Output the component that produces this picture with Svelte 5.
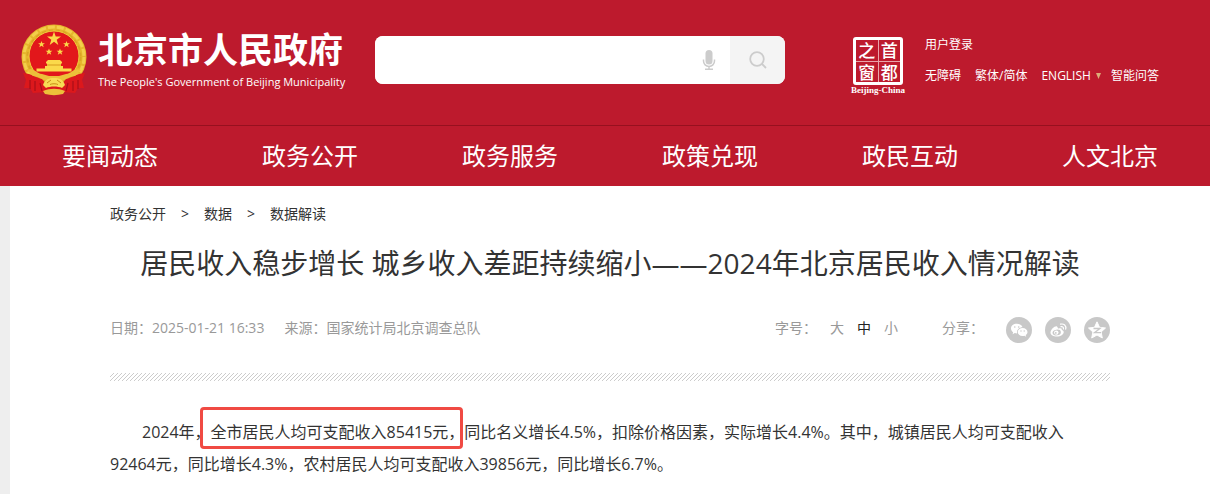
<script>
  const nav = ['要闻动态', '政务公开', '政务服务', '政策兑现', '政民互动', '人文北京'];
  const sizes = ['大', '中', '小'];
  let size = $state('中');
  let query = $state('');
</script>

<header>
  <div class="top">
    <a class="brand" href="#home">
      <svg class="emblem" viewBox="0 0 68 74" aria-hidden="true">
        <circle cx="34" cy="34" r="32.5" fill="#e6b62c" />
        <circle cx="34" cy="34" r="30" fill="none" stroke="#f3cf4b" stroke-width="3" stroke-dasharray="7 2" />
        <circle cx="34" cy="34" r="26.500" fill="none" stroke="#d9a524" stroke-width="2" stroke-dasharray="4 3" />
        <circle cx="34" cy="33" r="25" fill="#e2171b" stroke="#f0c83c" stroke-width="1" />
        <g fill="#fbd94a">
          <path d="M34 8.500l1.700 5.100h5.300l-4.300 3.200 1.600 5.200-4.300-3.200-4.300 3.200 1.600-5.200-4.300-3.200h5.300z" />
          <path d="M21.500 18l.9 2.300h2.500l-2 1.500.8 2.500-2.200-1.500-2.200 1.500.8-2.500-2-1.500h2.500zM46.500 18l.9 2.300h2.500l-2 1.500.8 2.500-2.200-1.500-2.200 1.500.8-2.500-2-1.500h2.500zM29 25.500l.9 2.300h2.500l-2 1.500.8 2.500-2.200-1.500-2.200 1.500.8-2.500-2-1.500H28zM40 25.500l.9 2.300h2.500l-2 1.500.8 2.500-2.200-1.500-2.200 1.500.8-2.500-2-1.500H39z" />
          <path d="M26 39l2-2h12l2 2v1.500h-1V43h2v2.500h8.500v3h-35v-3H25V43h2v-2.500h-1z" />
        </g>
        <path d="M27 42h14" stroke="#d79b1c" stroke-width="1" />
        <path d="M3 50c6 0 12 4 19 6l5 6h14l5-6c7-2 13-6 19-6l-3 7 2 8-6 0-3 5-12-1-4 3H29l-4-3-12 1-3-5-6 0 2-8z" fill="#dc181c" />
        <path d="M7 47c6-3 9 3 15 4l7 2h10l7-2c6-1 9-7 15-4l-6 6c-6 0-9 4-15 5H28c-6-1-9-5-15-5z" fill="#ecc03a" />
        <path d="M10 57v9M15 58v10M58 57v9M53 58v10M20 60l2 8M48 60l-2 8" fill="none" stroke="#a90f18" stroke-width="1.200" />
        <path d="M23 62c2-6 6-7 11-7s9 1 11 7l-3 3c-4-2-12-2-16 0z" fill="#f8dc55" />
        <path d="M27 60l4-3M41 60l-4-3M30 61.500c2-1 6-1 8 0" fill="none" stroke="#c98d17" stroke-width="1" />
        <path d="M23 68c7-3 15-3 22 0l-2 3c-6 1.500-12 1.500-18 0z" fill="#ecc03a" />
      </svg>
      <span class="names">
        <strong>北京市人民政府</strong>
        <span>The People's Government of Beijing Municipality</span>
      </span>
    </a>

    <form class="search" onsubmit={(e) => e.preventDefault()}>
      <input type="text" aria-label="搜索" bind:value={query} />
      <button class="mic" type="button" aria-label="语音">
        <svg width="14" height="22" viewBox="0 0 14 22">
          <rect x="3.500" y="1" width="7" height="14.500" rx="3.500" fill="#ccc" />
          <path d="M1.500 10.500v1.500a5.500 5.500 0 0 0 11 0v-1.500M7 17.500V20M3 20.300h8" fill="none" stroke="#ccc" stroke-width="1.500" />
        </svg>
      </button>
      <button class="go" type="submit" aria-label="搜索">
        <svg width="20" height="20" viewBox="0 0 20 20" fill="none" stroke="#ccc" stroke-width="1.800">
          <circle cx="9" cy="9" r="6.800" /><path d="M14 14l4 4" />
        </svg>
      </button>
    </form>

    <a class="seal" href="#capital">
      <span class="stamp"><i>之</i><i>首</i><i>窗</i><i>都</i></span>
      <span class="caption">Beijing-China</span>
    </a>

    <div class="links">
      <div><a href="#login">用户登录</a></div>
      <div class="row">
        <a href="#access">无障碍</a>
        <a href="#script">繁体/简体</a>
        <a class="english" href="#english">ENGLISH
          <svg width="5" height="6" viewBox="0 0 5 6" aria-hidden="true"><path d="M0 0h5L2.500 6z" fill="#dcae78" /></svg></a>
        <a href="#qa">智能问答</a>
      </div>
    </div>
  </div>
  <nav>
    {#each nav as item}<a href="#nav">{item}</a>{/each}
  </nav>
</header>

<main>
  <div class="crumbs">
    <a href="#gov">政务公开</a><span>&gt;</span><a href="#data">数据</a><span>&gt;</span><a href="#read">数据解读</a>
  </div>
  <h1>居民收入稳步增长 城乡收入差距持续缩小——2024年北京居民收入情况解读</h1>
  <div class="meta">
    <span class="date">日期：2025-01-21 16:33</span>
    <span class="source">来源：国家统计局北京调查总队</span>
    <div class="sizes">
      <span>字号：</span>
      {#each sizes as s}
        <button type="button" class:on={size === s} onclick={() => (size = s)}>{s}</button>
      {/each}
    </div>
    <div class="share">
      <span>分享：</span>
      <a href="#wechat" aria-label="微信">
        <svg viewBox="0 0 26 26">
          <circle cx="13" cy="13" r="13" fill="#c8c8c8" />
          <path d="M10.800 6.800c-3.300 0-5.800 2-5.800 4.700 0 1.500.8 2.800 2.100 3.700l-.5 2 2.200-1.100c.8.2 1.500.3 2.300.3-.6-3.500 2-6 5.400-6.100-.5-2-2.900-3.500-5.700-3.500z" fill="#fff" />
          <path d="M16.600 11c-2.800 0-4.900 1.800-4.900 4s2.100 4 4.900 4c.6 0 1.200-.1 1.800-.3l1.800 1-.5-1.700c1.100-.7 1.800-1.800 1.800-3 0-2.200-2.100-4-4.900-4z" fill="#fff" />
          <g fill="#c8c8c8"><circle cx="8.800" cy="10" r=".8" /><circle cx="12.700" cy="10" r=".8" /><circle cx="15" cy="14" r=".7" /><circle cx="18.200" cy="14" r=".7" /></g>
        </svg>
      </a>
      <a href="#weibo" aria-label="微博">
        <svg viewBox="0 0 26 26">
          <circle cx="13" cy="13" r="13" fill="#c8c8c8" />
          <path d="M12 9.500c-1.600-1.200-6.500 3-6.500 6 0 2.500 3 4.100 6.300 4.100 4 0 6.900-2.200 6.900-4.400 0-1.300-1-2-2-2.200.6-1.500-.6-2.400-3.300-1.400-.6.200-.4-1.200-1.400-2.100z" fill="#fff" />
          <ellipse cx="11.700" cy="15.500" rx="4.200" ry="2.900" fill="#c8c8c8" transform="rotate(-8 11.700 15.500)" />
          <circle cx="11.300" cy="15.600" r="2.200" fill="#fff" /><circle cx="10.800" cy="15.900" r=".9" fill="#c8c8c8" />
          <path d="M15.500 7.200c3.400-.9 6 1.500 5.200 5M16 9.700c1.700-.3 2.800.8 2.400 2.300" fill="none" stroke="#fff" stroke-width="1.200" stroke-linecap="round" />
        </svg>
      </a>
      <a href="#qzone" aria-label="QQ空间">
        <svg viewBox="0 0 26 26">
          <circle cx="13" cy="13" r="13" fill="#c8c8c8" />
          <path d="M13 4.800l2.500 5.500 6 .7-4.400 4 1.200 6-5.300-3-5.300 3 1.200-6-4.400-4 6-.7z" fill="#fff" stroke="#fff" stroke-linejoin="round" />
          <path d="M9.500 11.500h6.500l-5.500 4.200h6.500" fill="none" stroke="#c8c8c8" stroke-width="1.300" />
        </svg>
      </a>
    </div>
  </div>
  <div class="hatch"></div>
  <p>2024年，<mark>全市居民人均可支配收入85415元，</mark>同比名义增长4.5%，扣除价格因素，实际增长4.4%。其中，城镇居民人均可支配收入92464元，同比增长4.3%，农村居民人均可支配收入39856元，同比增长6.7%。</p>
</main>

<style>
  :global(body) {
    margin: 0;
    background: #eee;
    font-family: "Open Sans", "Noto Sans CJK SC", sans-serif;
  }
  a { color: inherit; text-decoration: none; }
  button { border: 0; padding: 0; background: none; font: inherit; color: inherit; cursor: pointer; }
  svg { display: block; }
  header { background: #bd1a2d; color: #fff; }
  .top {
    display: flex;
    align-items: flex-start;
    height: 125px;
    padding-left: 20px;
    border-bottom: 1px solid #97101f;
  }
  .brand { display: flex; flex: none; gap: 10px; width: 355px; padding-top: 23px; }
  .emblem { width: 68px; height: 74px; }
  .names { display: flex; flex-direction: column; padding-top: 5px; white-space: nowrap; }
  .names strong { font-size: 35px; line-height: 44px; font-weight: 700; }
  .names span { font-size: 11px; line-height: 20px; }
  .search {
    display: flex;
    flex: 0 1 410px;
    height: 48px;
    margin-top: 36px;
    border-radius: 8px;
    overflow: hidden;
    background: #fff;
  }
  .search input { flex: 1; min-width: 0; border: 0; outline: 0; padding: 0 16px; font: inherit; font-size: 16px; }
  .mic { display: grid; place-items: center; width: 42px; }
  .go { display: grid; place-items: center; width: 55px; background: #f4f4f4; }
  .seal {
    display: flex;
    flex: none;
    flex-direction: column;
    align-items: center;
    width: 56px;
    margin: 37px 0 0 65px;
  }
  .stamp {
    display: grid;
    grid-template-columns: 1fr 1fr;
    gap: 1px;
    box-sizing: border-box;
    width: 50px;
    height: 48px;
    border: 3px solid #fff;
    border-radius: 3px;
    background: #e9a3a9;
  }
  .stamp i {
    background: #bd1a2d;
    font: 500 17px/20px "Noto Sans CJK SC", sans-serif;
    text-align: center;
  }
  .caption { font: 700 9px/10px "Liberation Serif", serif; white-space: nowrap; }
  .links { margin: 36px 0 0 19px; font-size: 12px; line-height: 18px; white-space: nowrap; }
  .row { display: flex; gap: 14px; margin-top: 13px; }
  .english { display: flex; align-items: center; gap: 5px; margin-right: -4px; }
  nav { display: flex; height: 60px; padding-left: 10px; }
  nav a { flex: 1; font-size: 24px; line-height: 60px; text-align: center; }
  main { margin-left: 10px; padding: 18px 100px 14px; background: #fff; color: #333; }
  .crumbs { display: flex; font-size: 14px; line-height: 20px; }
  .crumbs span { width: 38px; text-align: center; }
  h1 { margin: 18px 0 0; font-size: 28px; line-height: 42px; font-weight: 400; text-align: center; }
  .meta { display: flex; align-items: center; height: 26px; margin-top: 33px; color: #999; font-size: 14px; line-height: 20px; white-space: nowrap; }
  .meta > span, .sizes, .share > span { padding-bottom: 4px; }
  .date { margin-right: 20px; }
  .sizes { display: flex; gap: 13px; margin-left: auto; }
  .sizes .on { color: #222; }
  .share { display: flex; align-items: center; gap: 13px; margin-left: 44px; }
  .share > span { margin-right: 9px; }
  .share svg { width: 26px; height: 26px; }
  .hatch {
    height: 8px;
    margin-top: 30px;
    background: linear-gradient(135deg, #ccc 12%, #fff 12% 44%, #ccc 44% 62%, #fff 62%) 0 0 / 4px 4px;
  }
  p { margin: 35px 0 0; padding-right: 20px; font-size: 16px; line-height: 32px; text-indent: 32px; }
  mark { position: relative; background: none; color: inherit; }
  mark::after {
    content: "";
    position: absolute;
    inset: -14px 1px -6px -11px;
    border: 3px solid #f04a43;
    border-radius: 4px;
  }
</style>
